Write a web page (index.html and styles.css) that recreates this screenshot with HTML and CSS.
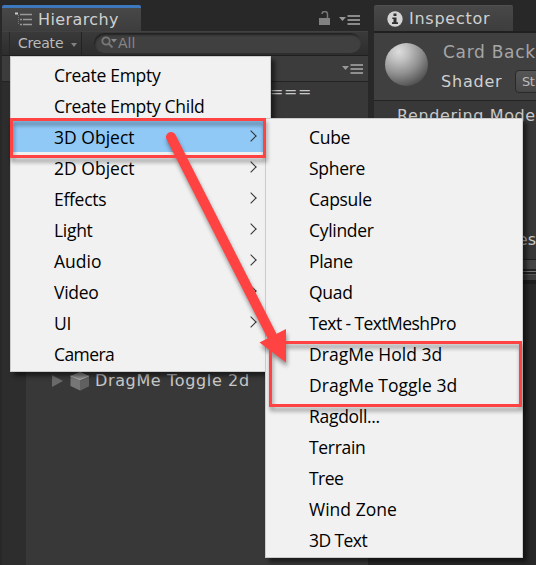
FILE: index.html
```html
<!DOCTYPE html>
<html lang="en">
<head>
<meta charset="utf-8">
<title>Hierarchy</title>
<link rel="stylesheet" href="styles.css">
</head>
<body>
<div class="editor">
  <section class="panel hierarchy">
    <header class="tabs">
      <div class="tab active">
        <svg class="tree-icon" width="18" height="15" viewBox="0 0 18 15"><path d="M0 1.500h3" stroke="#ccc" stroke-width="2"/><path d="M5 2.500h12M5 7.500h2M8 7.500h9M5 12.500h2M8 12.500h9" stroke="#999" stroke-width="1.500"/><path d="M3.500 3v10" stroke="#777" stroke-dasharray="1 1"/></svg>
        <span class="title">Hierarchy</span>
      </div>
      <div class="tab-tools">
        <svg width="12" height="15" viewBox="0 0 12 15"><path d="M0 7h11v7H0z" fill="#818181"/><path d="M3 3q0-2.500 2.700-2.500T8.500 3v4" fill="none" stroke="#777" stroke-width="1.500"/></svg>
        <svg width="22" height="10" viewBox="0 0 22 10"><path d="M0 2h7L3.500 6z" fill="#999"/><path d="M8.500 1h12.500M8.500 5h12.500M8.500 9h12.500" stroke="#aaa" stroke-width="1.500"/></svg>
      </div>
    </header>
    <div class="toolbar">
      <div class="create"><span>Create</span><i class="caret"></i></div>
      <div class="search">
        <svg width="17" height="13" viewBox="0 0 17 13"><circle cx="5" cy="5" r="3.700" fill="none" stroke="#777" stroke-width="1.800"/><path d="M7.500 7.500l4 4" stroke="#777" stroke-width="2"/><path d="M10 3h6l-3 3.500z" fill="#888"/></svg>
        <span>All</span>
      </div>
    </div>
    <div class="scene">
      <svg width="22" height="10" viewBox="0 0 22 10"><path d="M0 2h7L3.500 6z" fill="#999"/><path d="M8.500 1h12.500M8.500 5h12.500M8.500 9h12.500" stroke="#aaa" stroke-width="1.500"/></svg>
    </div>
    <div class="tree">
      <div class="rail"></div>
      <div class="rows">
        <div class="divider-name">===</div>
        <div class="object">
          <svg width="11" height="14" viewBox="0 0 11 14"><path d="M0 1l11 6L0 13z" fill="#6a6a6a"/></svg>
          <svg class="cube" width="20" height="19" viewBox="0 0 20 19"><path d="M.500 4L10 0l9 4v10l-9 4.500-9.500-4.500z" fill="#777"/><path d="M.500 4L10 0l9 4-9 3.500z" fill="#8c8c8c"/><path d="M10 7.500l9-3.500v10l-9 4.500z" fill="#606060"/><path d="M.500 4L10 7.500 19 4" fill="none" stroke="#aaa"/></svg>
          <span class="object-name">DragMe Toggle 2d</span>
        </div>
      </div>
    </div>
  </section>
  <section class="panel inspector">
    <header class="tabs">
      <div class="tab">
        <svg class="info-icon" width="16" height="16" viewBox="0 0 16 16"><circle cx="8" cy="8" r="7.700" fill="#d4d4d4"/><path d="M6.500 2.500h3V5h-3zM5.300 6.500h4.200v4.700h1.500V13H5v-1.800h1.500V8H5.300z" fill="#303030"/></svg>
        <span class="title">Inspector</span>
      </div>
    </header>
    <div class="material">
      <div class="ball"></div>
      <div class="fields">
        <div class="name">Card Back</div>
        <div class="shader"><span class="label">Shader</span><span class="drop">St</span></div>
      </div>
    </div>
    <div class="properties">
      <div class="mode">Rendering Mode</div>
      <div class="clipped">es</div>
    </div>
    <div class="preview-bar"></div>
  </section>
</div>

<ul class="menu main-menu">
  <li>Create Empty</li>
  <li>Create Empty Child</li>
  <li class="sub roomy selected">3D Object</li>
  <li class="sub roomy">2D Object</li>
  <li class="sub">Effects</li>
  <li class="sub">Light</li>
  <li class="sub roomy">Audio</li>
  <li class="sub">Video</li>
  <li class="sub">UI</li>
  <li class="tight">Camera</li>
</ul>
<ul class="menu sub-menu">
  <li>Cube</li>
  <li>Sphere</li>
  <li>Capsule</li>
  <li>Cylinder</li>
  <li>Plane</li>
  <li>Quad</li>
  <li class="tight">Text - TextMeshPro</li>
  <li class="roomy">DragMe Hold 3d</li>
  <li class="roomy">DragMe Toggle 3d</li>
  <li>Ragdoll...</li>
  <li>Terrain</li>
  <li class="tight">Tree</li>
  <li class="roomy">Wind Zone</li>
  <li class="tight">3D Text</li>
</ul>
<svg class="marks" width="536" height="565" viewBox="0 0 536 565">
  <g fill="none" stroke="#ff4343" stroke-width="3">
    <path d="M11.500 119.500h253v37h-253z"/>
    <path d="M270.500 342.500h250v63h-250z"/>
  </g>
  <g>
    <path d="M171 137L273 338" stroke="#ff4343" stroke-width="10" stroke-linecap="round"/>
    <path d="M259.500 342.500L286 329v33.500z" fill="#ff4343"/>
  </g>
</svg>
</body>
</html>
```
FILE: styles.css
```css
* { box-sizing: border-box; }
body {
  margin: 0;
  width: 536px;
  height: 565px;
  overflow: hidden;
  position: relative;
  background: #282828;
  font-family: "DejaVu Sans", sans-serif;
  color: #c8c8c8;
}
svg { display: block; flex: none; }
.editor {
  display: grid;
  grid-template-columns: 366px 162px;
  gap: 6px;
  height: 565px;
  padding: 5px 0 0 2px;
}
.panel { display: flex; flex-direction: column; overflow: hidden; white-space: nowrap; }
.tabs { display: flex; flex: none; height: 26px; justify-content: space-between; }
.tab {
  display: flex;
  align-items: center;
  width: 139px;
  background: linear-gradient(#484848, #3d3d3d);
  border-top: 1px solid #505050;
  border-radius: 2px 2px 0 0;
}
.tab.active { border-top: 3px solid #3d78bd; padding-left: 13px; }
.title { font-size: 16px; line-height: 20px; letter-spacing: .4px; color: #d0d0d0; }
.inspector .title { letter-spacing: .75px; }
.tree-icon { margin-right: 5px; }
.tab-tools { display: flex; align-items: center; gap: 8px; padding: 1px 7px 0 0; }
.tab-tools svg:last-child { margin-top: 2px; }
.toolbar {
  display: flex;
  flex: none;
  height: 25px;
  background: linear-gradient(#3a3a3a, #2d2d2d);
  border-top: 1px solid #424242;
  border-bottom: 1px solid #202020;
}
.create {
  display: flex;
  align-items: center;
  width: 73px;
  margin-left: 7px;
  padding: 0 0 2px 8px;
  border-left: 1px solid #272727;
  border-right: 1px solid #222;
  font-size: 14px;
  letter-spacing: -.2px;
  color: #bbb;
}
.caret { margin: 4px 0 0 8px; border: solid transparent; border-width: 4px 3px 0; border-top-color: #828282; }
.search {
  display: flex;
  align-items: center;
  width: 267px;
  height: 20px;
  margin: 1px 0 0 12px;
  padding: 0 0 1px 7px;
  border-radius: 10px;
  background: #404040;
  box-shadow: inset 1px 2px 2px #222;
  font-size: 14px;
  color: #858585;
}
.scene {
  display: flex;
  flex: none;
  justify-content: flex-end;
  align-items: center;
  height: 26px;
  padding: 1px 4px 0 0;
  background: #3c3c3c;
  border-bottom: 1px solid #232323;
}
.tree { display: flex; flex: 1; background: #383838; }
.rail { width: 24px; background: #2d2d2d; }
.rows { flex: 1; }
.divider-name { height: 284px; padding: 0 56px 0 0; text-align: right; font-size: 16px; line-height: 20px; letter-spacing: .6px; }
.object { display: flex; align-items: center; height: 29px; padding-left: 26px; }
.cube { margin: 1px 5px 0 7px; }
.object-name { font-size: 16px; letter-spacing: .64px; }

.inspector .tab { padding-left: 13px; }
.info-icon { margin-right: 6px; }
.material {
  display: flex;
  flex: none;
  height: 70px;
  padding: 10px 0 0 11px;
  border-top: 2px solid #202020;
  border-bottom: 1px solid #242424;
  background: #404040;
}
.ball {
  flex: none;
  width: 43px;
  height: 43px;
  border-radius: 50%;
  background: radial-gradient(circle at 32% 20%, #ddd 0, #c2c2c2 20%, #8f8f8f 50%, #555 78%, #292929 100%);
}
.fields { margin-left: 15px; }
.name { font-size: 17px; line-height: 18px; color: #a6a6a6; letter-spacing: .7px; }
.shader { display: flex; align-items: center; margin-top: 8px; height: 24px; font-size: 16px; color: #d0d0d0; }
.label { width: 74px; margin-left: -2px; letter-spacing: .8px; }
.drop {
  width: 60px;
  height: 23px;
  padding-left: 6px;
  border: 1px solid #292929;
  border-radius: 4px;
  background: linear-gradient(#565656, #464646);
  font-size: 13px;
  letter-spacing: -.5px;
  line-height: 22px;
  color: #bbb;
}
.properties { flex: none; height: 158px; padding: 4px 0 0 23px; background: #383838; font-size: 16px; }
.mode { height: 123px; line-height: 22px; letter-spacing: .6px; }
.clipped { width: 139px; text-align: right; line-height: 24px; }
.preview-bar {
  flex: none;
  height: 25px;
  border-top: 1px solid #202020;
  border-bottom: 4px solid #1e1e1e;
  background: linear-gradient(#444 0 9px, #222 9px 11px, #777 11px 12px, #222 12px 14px, #555 14px 15px, #3d3d3d 15px);
}

.menu {
  position: absolute;
  margin: 0;
  padding: 2px;
  list-style: none;
  background: #f1f1f1;
  border: 1px solid #ccc;
  box-shadow: 4px 4px 4px rgba(0, 0, 0, .5);
  font-family: "Open Sans", "Noto Sans", sans-serif;
  font-size: 17.500px;
  color: #000;
}
.menu li {
  display: flex;
  align-items: center;
  justify-content: space-between;
  height: 31px;
  padding: 1px 13px 0 41px;
  letter-spacing: -.3px;
  white-space: nowrap;
}
.menu .roomy { letter-spacing: .02px; }
.menu .tight { letter-spacing: -.58px; }
.main-menu { left: 10px; top: 56px; width: 261px; height: 316px; }
.sub-menu { left: 265px; top: 118px; width: 258px; height: 440px; }
.menu .selected { background: #90c8f6; }
.sub::after {
  content: "";
  width: 7px;
  height: 7px;
  margin-top: -2px;
  border: solid #333;
  border-width: 1.500px 1.500px 0 0;
  transform: rotate(45deg);
}
.marks { position: absolute; left: 0; top: 0; filter: drop-shadow(1px 4px 2px rgba(0, 0, 0, .4)); }
```
